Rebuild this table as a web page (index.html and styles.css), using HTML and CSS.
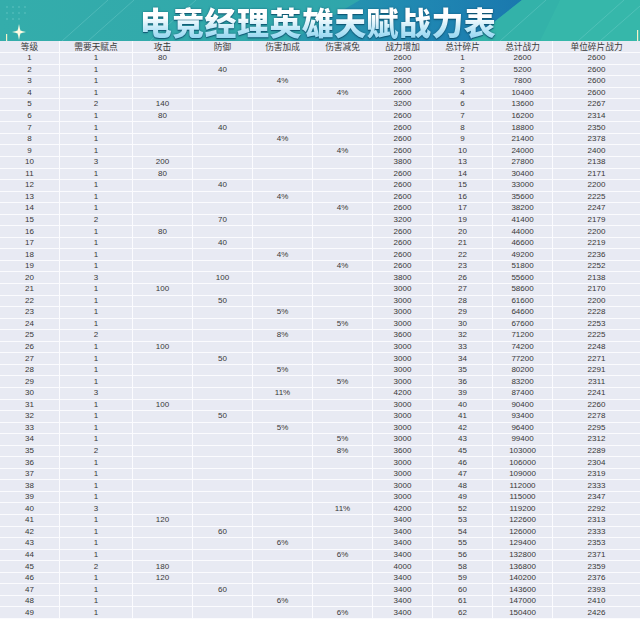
FILE: index.html
```html
<!DOCTYPE html>
<html lang="zh-CN">
<head>
<meta charset="utf-8">
<title>电竞经理英雄天赋战力表</title>
<link rel="stylesheet" href="styles.css">
</head>
<body>
<header class="banner">
  <svg class="banner-art" width="640" height="41" viewBox="0 0 640 41" aria-hidden="true">
    <defs>
      <linearGradient id="bandGrad" x1="0" y1="0" x2="1" y2="0">
        <stop offset="0" stop-color="#2a9bad"/>
        <stop offset="0.6" stop-color="#1f86b2"/>
        <stop offset="1" stop-color="#1a78ae"/>
      </linearGradient>
      <linearGradient id="leftGrad" x1="0" y1="0" x2="1" y2="0">
        <stop offset="0" stop-color="#34adab"/>
        <stop offset="1" stop-color="#2ca0ab"/>
      </linearGradient>
      <radialGradient id="spark" cx="0.5" cy="0.5" r="0.5">
        <stop offset="0" stop-color="#fffbe0"/>
        <stop offset="1" stop-color="#fffbe0" stop-opacity="0"/>
      </radialGradient>
    </defs>
    <rect width="640" height="41" fill="url(#leftGrad)"/>
    <polygon points="290,41 360,0 522,0 470,41" fill="url(#bandGrad)"/>
    <polygon points="522,0 640,0 640,41 470,41" fill="#33b2a9"/>
    <polygon points="560,0 640,0 640,41 540,41" fill="#38b9ab" opacity="0.7"/>
    <g stroke="#7fd3d0" stroke-width="0.8" opacity="0.45" fill="none">
      <line x1="62" y1="41" x2="108" y2="0"/>
      <line x1="88" y1="41" x2="134" y2="0"/>
      <line x1="150" y1="41" x2="196" y2="0"/>
      <line x1="500" y1="41" x2="546" y2="0"/>
      <line x1="578" y1="41" x2="624" y2="0"/>
      <line x1="600" y1="41" x2="640" y2="6"/>
    </g>
    <g fill="#5cc2c0" opacity="0.5">
      <rect x="6" y="6" width="2" height="2"/><rect x="12" y="6" width="2" height="2"/><rect x="18" y="6" width="2" height="2"/><rect x="24" y="6" width="2" height="2"/>
      <rect x="6" y="12" width="2" height="2"/><rect x="12" y="12" width="2" height="2"/><rect x="18" y="12" width="2" height="2"/><rect x="24" y="12" width="2" height="2"/>
      <rect x="6" y="18" width="2" height="2"/><rect x="12" y="18" width="2" height="2"/><rect x="18" y="18" width="2" height="2"/>
    </g>
    <rect x="6" y="34" width="1.2" height="7" fill="#f4f2c8"/>
    <path d="M19 24 L20.3 30.7 L26 32 L20.3 33.3 L19 40 L17.7 33.3 L12 32 L17.7 30.7 Z" fill="#fffbe3"/>
    <circle cx="19" cy="32" r="3.5" fill="url(#spark)"/>
    <rect x="637" y="30" width="1.2" height="11" fill="#f4f2c8"/>
  </svg>
  <h1 class="title">电竞经理英雄天赋战力表</h1>
</header>
<table class="grid">
  <thead>
    <tr><th>等级</th><th>需要天赋点</th><th>攻击</th><th>防御</th><th>伤害加成</th><th>伤害减免</th><th>战力增加</th><th>总计碎片</th><th>总计战力</th><th>单位碎片战力</th></tr>
  </thead>
  <tbody>
    <tr><td>1</td><td>1</td><td>80</td><td></td><td></td><td></td><td>2600</td><td>1</td><td>2600</td><td>2600</td></tr>
    <tr><td>2</td><td>1</td><td></td><td>40</td><td></td><td></td><td>2600</td><td>2</td><td>5200</td><td>2600</td></tr>
    <tr><td>3</td><td>1</td><td></td><td></td><td>4%</td><td></td><td>2600</td><td>3</td><td>7800</td><td>2600</td></tr>
    <tr><td>4</td><td>1</td><td></td><td></td><td></td><td>4%</td><td>2600</td><td>4</td><td>10400</td><td>2600</td></tr>
    <tr><td>5</td><td>2</td><td>140</td><td></td><td></td><td></td><td>3200</td><td>6</td><td>13600</td><td>2267</td></tr>
    <tr><td>6</td><td>1</td><td>80</td><td></td><td></td><td></td><td>2600</td><td>7</td><td>16200</td><td>2314</td></tr>
    <tr><td>7</td><td>1</td><td></td><td>40</td><td></td><td></td><td>2600</td><td>8</td><td>18800</td><td>2350</td></tr>
    <tr><td>8</td><td>1</td><td></td><td></td><td>4%</td><td></td><td>2600</td><td>9</td><td>21400</td><td>2378</td></tr>
    <tr><td>9</td><td>1</td><td></td><td></td><td></td><td>4%</td><td>2600</td><td>10</td><td>24000</td><td>2400</td></tr>
    <tr><td>10</td><td>3</td><td>200</td><td></td><td></td><td></td><td>3800</td><td>13</td><td>27800</td><td>2138</td></tr>
    <tr><td>11</td><td>1</td><td>80</td><td></td><td></td><td></td><td>2600</td><td>14</td><td>30400</td><td>2171</td></tr>
    <tr><td>12</td><td>1</td><td></td><td>40</td><td></td><td></td><td>2600</td><td>15</td><td>33000</td><td>2200</td></tr>
    <tr><td>13</td><td>1</td><td></td><td></td><td>4%</td><td></td><td>2600</td><td>16</td><td>35600</td><td>2225</td></tr>
    <tr><td>14</td><td>1</td><td></td><td></td><td></td><td>4%</td><td>2600</td><td>17</td><td>38200</td><td>2247</td></tr>
    <tr><td>15</td><td>2</td><td></td><td>70</td><td></td><td></td><td>3200</td><td>19</td><td>41400</td><td>2179</td></tr>
    <tr><td>16</td><td>1</td><td>80</td><td></td><td></td><td></td><td>2600</td><td>20</td><td>44000</td><td>2200</td></tr>
    <tr><td>17</td><td>1</td><td></td><td>40</td><td></td><td></td><td>2600</td><td>21</td><td>46600</td><td>2219</td></tr>
    <tr><td>18</td><td>1</td><td></td><td></td><td>4%</td><td></td><td>2600</td><td>22</td><td>49200</td><td>2236</td></tr>
    <tr><td>19</td><td>1</td><td></td><td></td><td></td><td>4%</td><td>2600</td><td>23</td><td>51800</td><td>2252</td></tr>
    <tr><td>20</td><td>3</td><td></td><td>100</td><td></td><td></td><td>3800</td><td>26</td><td>55600</td><td>2138</td></tr>
    <tr><td>21</td><td>1</td><td>100</td><td></td><td></td><td></td><td>3000</td><td>27</td><td>58600</td><td>2170</td></tr>
    <tr><td>22</td><td>1</td><td></td><td>50</td><td></td><td></td><td>3000</td><td>28</td><td>61600</td><td>2200</td></tr>
    <tr><td>23</td><td>1</td><td></td><td></td><td>5%</td><td></td><td>3000</td><td>29</td><td>64600</td><td>2228</td></tr>
    <tr><td>24</td><td>1</td><td></td><td></td><td></td><td>5%</td><td>3000</td><td>30</td><td>67600</td><td>2253</td></tr>
    <tr><td>25</td><td>2</td><td></td><td></td><td>8%</td><td></td><td>3600</td><td>32</td><td>71200</td><td>2225</td></tr>
    <tr><td>26</td><td>1</td><td>100</td><td></td><td></td><td></td><td>3000</td><td>33</td><td>74200</td><td>2248</td></tr>
    <tr><td>27</td><td>1</td><td></td><td>50</td><td></td><td></td><td>3000</td><td>34</td><td>77200</td><td>2271</td></tr>
    <tr><td>28</td><td>1</td><td></td><td></td><td>5%</td><td></td><td>3000</td><td>35</td><td>80200</td><td>2291</td></tr>
    <tr><td>29</td><td>1</td><td></td><td></td><td></td><td>5%</td><td>3000</td><td>36</td><td>83200</td><td>2311</td></tr>
    <tr><td>30</td><td>3</td><td></td><td></td><td>11%</td><td></td><td>4200</td><td>39</td><td>87400</td><td>2241</td></tr>
    <tr><td>31</td><td>1</td><td>100</td><td></td><td></td><td></td><td>3000</td><td>40</td><td>90400</td><td>2260</td></tr>
    <tr><td>32</td><td>1</td><td></td><td>50</td><td></td><td></td><td>3000</td><td>41</td><td>93400</td><td>2278</td></tr>
    <tr><td>33</td><td>1</td><td></td><td></td><td>5%</td><td></td><td>3000</td><td>42</td><td>96400</td><td>2295</td></tr>
    <tr><td>34</td><td>1</td><td></td><td></td><td></td><td>5%</td><td>3000</td><td>43</td><td>99400</td><td>2312</td></tr>
    <tr><td>35</td><td>2</td><td></td><td></td><td></td><td>8%</td><td>3600</td><td>45</td><td>103000</td><td>2289</td></tr>
    <tr><td>36</td><td>1</td><td></td><td></td><td></td><td></td><td>3000</td><td>46</td><td>106000</td><td>2304</td></tr>
    <tr><td>37</td><td>1</td><td></td><td></td><td></td><td></td><td>3000</td><td>47</td><td>109000</td><td>2319</td></tr>
    <tr><td>38</td><td>1</td><td></td><td></td><td></td><td></td><td>3000</td><td>48</td><td>112000</td><td>2333</td></tr>
    <tr><td>39</td><td>1</td><td></td><td></td><td></td><td></td><td>3000</td><td>49</td><td>115000</td><td>2347</td></tr>
    <tr><td>40</td><td>3</td><td></td><td></td><td></td><td>11%</td><td>4200</td><td>52</td><td>119200</td><td>2292</td></tr>
    <tr><td>41</td><td>1</td><td>120</td><td></td><td></td><td></td><td>3400</td><td>53</td><td>122600</td><td>2313</td></tr>
    <tr><td>42</td><td>1</td><td></td><td>60</td><td></td><td></td><td>3400</td><td>54</td><td>126000</td><td>2333</td></tr>
    <tr><td>43</td><td>1</td><td></td><td></td><td>6%</td><td></td><td>3400</td><td>55</td><td>129400</td><td>2353</td></tr>
    <tr><td>44</td><td>1</td><td></td><td></td><td></td><td>6%</td><td>3400</td><td>56</td><td>132800</td><td>2371</td></tr>
    <tr><td>45</td><td>2</td><td>180</td><td></td><td></td><td></td><td>4000</td><td>58</td><td>136800</td><td>2359</td></tr>
    <tr><td>46</td><td>1</td><td>120</td><td></td><td></td><td></td><td>3400</td><td>59</td><td>140200</td><td>2376</td></tr>
    <tr><td>47</td><td>1</td><td></td><td>60</td><td></td><td></td><td>3400</td><td>60</td><td>143600</td><td>2393</td></tr>
    <tr><td>48</td><td>1</td><td></td><td></td><td>6%</td><td></td><td>3400</td><td>61</td><td>147000</td><td>2410</td></tr>
    <tr><td>49</td><td>1</td><td></td><td></td><td></td><td>6%</td><td>3400</td><td>62</td><td>150400</td><td>2426</td></tr>
  </tbody>
</table>
</body>
</html>
```
FILE: styles.css
```css
html, body {
  margin: 0;
  padding: 0;
  background: #e8eaf3;
}
body {
  width: 640px;
  height: 619px;
  overflow: hidden;
  font-family: "Liberation Sans", "Noto Sans CJK SC", sans-serif;
  color: #383838;
}
.banner {
  position: relative;
  height: 41px;
  display: flex;
  justify-content: center;
  align-items: center;
}
.banner-art {
  position: absolute;
  left: 0;
  top: 0;
  display: block;
}
.title {
  position: relative;
  margin: 0 0 0 -4px;
  font-family: "Noto Sans CJK SC", sans-serif;
  font-weight: 900;
  font-size: 32px;
  line-height: 38px;
  height: 38px;
  letter-spacing: 0.4px;
  background: linear-gradient(180deg, #ffffff 0%, #ffffff 40%, #b6e4f6 75%, #8fd3f0 100%);
  -webkit-background-clip: text;
  background-clip: text;
  color: transparent;
  filter: drop-shadow(0 1.5px 0 rgba(12, 80, 110, 0.75)) drop-shadow(0 0 1px rgba(10, 70, 100, 0.6));
}
.grid {
  display: grid;
  width: 640px;
  height: 578px;
  grid-template-columns: 60px 73px repeat(7, 60px) 87px;
  grid-template-rows: 12px repeat(49, 1fr);
  background: #e8eaf3;
  border-collapse: separate;
  border-spacing: 0;
}
.grid thead,
.grid tbody,
.grid tr {
  display: contents;
}
.grid th,
.grid td {
  display: flex;
  align-items: center;
  justify-content: center;
  box-sizing: border-box;
  padding: 0;
  border-right: 1px solid #fbfbfe;
  border-bottom: 1px solid #fbfbfe;
  white-space: nowrap;
  overflow: hidden;
  min-height: 0;
}
.grid tr > :last-child {
  border-right: 0;
}
.grid th {
  font-family: "Noto Sans CJK SC", sans-serif;
  font-weight: 400;
  font-size: 8.7px;
  line-height: 10px;
  color: #3a3a3a;
}
.grid td {
  font-size: 8px;
  line-height: 10px;
}
```
